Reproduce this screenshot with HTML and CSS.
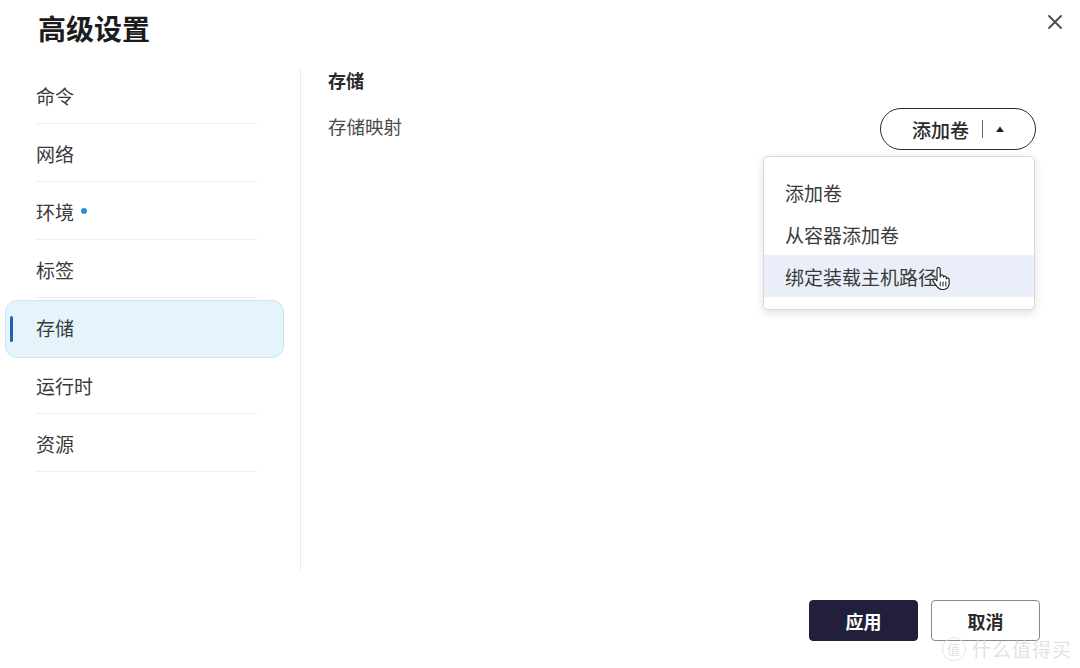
FILE: index.html
```html
<!DOCTYPE html>
<html lang="zh-CN">
<head>
<meta charset="utf-8">
<title>高级设置</title>
<link rel="stylesheet" href="styles.css">
</head>
<body>
<div class="dialog">
  <header class="header">
    <h1 class="title">高级设置</h1>
    <button class="close" aria-label="关闭">
      <svg width="16" height="16" viewBox="0 0 16 16"><path d="M2 2L14 14M14 2L2 14" stroke="#4a4a4a" stroke-width="1.8" stroke-linecap="round"/></svg>
    </button>
  </header>
  <div class="main">
    <nav class="sidebar">
      <ul class="nav">
        <li class="nav-item"><div class="nav-inner">命令</div></li>
        <li class="nav-item"><div class="nav-inner">网络</div></li>
        <li class="nav-item"><div class="nav-inner">环境<span class="dot"></span></div></li>
        <li class="nav-item"><div class="nav-inner">标签</div></li>
        <li class="nav-item active"><div class="nav-inner">存储</div></li>
        <li class="nav-item"><div class="nav-inner">运行时</div></li>
        <li class="nav-item"><div class="nav-inner">资源</div></li>
      </ul>
    </nav>
    <section class="content">
      <h2 class="section-title">存储</h2>
      <div class="row">
        <span class="row-label">存储映射</span>
        <div class="split-wrap">
          <button class="split-btn">
            <span class="split-text">添加卷</span>
            <span class="split-sep"></span>
            <svg class="caret" width="10" height="8" viewBox="0 0 10 8"><path d="M1 7L5 1.5L9 7Z" fill="#222"/></svg>
          </button>
          <ul class="menu">
            <li class="menu-item">添加卷</li>
            <li class="menu-item">从容器添加卷</li>
            <li class="menu-item hover">绑定装载主机路径
              <svg class="cursor" width="22" height="24" viewBox="0 0 22 24">
                <path d="M6 2.2c0-1 .7-1.7 1.6-1.7s1.6.7 1.6 1.7V10l.3-1.2c.3-.8 1.1-1.2 1.9-.9.6.2 1 .8 1 1.4v.8c.3-.7 1-1.1 1.8-.9.7.2 1.1.8 1.1 1.5v.9c.4-.6 1.1-.8 1.8-.6.7.3 1 .9 1 1.6v4.3c0 3.1-2.5 5.6-5.6 5.6H11c-1.8 0-3.4-.9-4.500-2.3L2.3 14.6c-.6-.8-.5-1.8.3-2.4.7-.5 1.7-.4 2.3.3L6 13.9V2.2z" fill="#fff" stroke="#1a1a1a" stroke-width="1.1" stroke-linejoin="round"/>
                <path d="M9.2 15v4M12 15v4M14.8 15v4" stroke="#1a1a1a" stroke-width="1" stroke-linecap="round"/>
              </svg>
            </li>
          </ul>
        </div>
      </div>
    </section>
  </div>
  <footer class="footer">
    <button class="btn btn-primary">应用</button>
    <button class="btn btn-secondary">取消</button>
  </footer>
  <div class="watermark"><span class="wm-logo">值</span>什么值得买</div>
</div>
</body>
</html>
```

FILE: styles.css
```css
* { box-sizing: border-box; }
html, body { margin: 0; padding: 0; }
body {
  width: 1080px;
  height: 668px;
  overflow: hidden;
  background: #ffffff;
  font-family: "Noto Sans CJK SC", "Noto Sans", sans-serif;
  color: #333;
}
.dialog {
  position: relative;
  width: 1080px;
  height: 668px;
}
.header {
  height: 68px;
  display: flex;
  align-items: flex-start;
  justify-content: space-between;
  padding: 9px 16px 0 38px;
}
.title {
  margin: 0;
  font-size: 28px;
  line-height: 38px;
  font-weight: 700;
  color: #1c1c1c;
}
.close {
  border: 0;
  background: none;
  padding: 0;
  margin-top: 4px;
  width: 18px;
  height: 18px;
  display: flex;
  align-items: center;
  justify-content: center;
}
.main {
  display: flex;
  height: 502px;
}
.sidebar {
  width: 301px;
  border-right: 1px solid #ebebeb;
  padding-left: 5px;
}
.nav {
  list-style: none;
  margin: 0;
  padding: 0;
  width: 279px;
}
.nav-item {
  position: relative;
  height: 58px;
  padding: 0 26px 0 30px;
  border: 1px solid transparent;
  border-radius: 12px;
}
.nav-inner {
  height: 57px;
  display: flex;
  align-items: center;
  font-size: 19px;
  color: #3a3a3a;
  border-bottom: 1px solid #eeeeee;
  margin-top: -2px;
}
.nav-item.active {
  background: #e5f4fb;
  border-color: #c9e4f2;
}
.nav-item.active .nav-inner { border-bottom-color: transparent; }
.nav-item.active::before {
  content: "";
  position: absolute;
  left: 4px;
  top: 15px;
  width: 3px;
  height: 26px;
  border-radius: 2px;
  background: #1b64b4;
}
.dot {
  width: 6px;
  height: 6px;
  border-radius: 50%;
  background: #2e8fd3;
  margin-left: 7px;
}
.content {
  flex: 1;
  padding: 0 44px 0 27px;
}
.section-title {
  margin: 0;
  font-size: 18px;
  line-height: 24px;
  font-weight: 700;
  color: #2a2a2a;
}
.row {
  margin-top: 16px;
  display: flex;
  justify-content: space-between;
  align-items: flex-start;
}
.row-label {
  font-size: 18.5px;
  line-height: 24px;
  margin-top: 6px;
  color: #4a4a4a;
}
.split-wrap { position: relative; }
.split-btn {
  width: 156px;
  height: 42px;
  border: 1.5px solid #2a2a2a;
  border-radius: 21px;
  background: #fff;
  display: flex;
  align-items: center;
  justify-content: flex-end;
  padding: 0 30px 0 0;
  font-family: inherit;
  cursor: pointer;
}
.split-text {
  font-size: 19px;
  font-weight: 500;
  color: #2a2a2a;
}
.split-sep {
  width: 1px;
  height: 18px;
  background: #6a6a6a;
  margin: 0 12px 0 13px;
}
.caret { margin-top: -1px; }
.menu {
  position: absolute;
  top: 48px;
  right: 1px;
  width: 272px;
  list-style: none;
  margin: 0;
  padding: 14px 0 12px;
  background: #fff;
  border: 1px solid #d8d8d8;
  border-radius: 5px;
  box-shadow: 0 3px 10px rgba(0,0,0,0.12);
}
.menu-item {
  position: relative;
  height: 42px;
  display: flex;
  align-items: center;
  padding-left: 21px;
  font-size: 19px;
  color: #3a3a3a;
}
.menu-item.hover { background: #e9eef8; }
.cursor {
  position: absolute;
  left: 167px;
  top: 12px;
}
.footer {
  display: flex;
  justify-content: flex-end;
  gap: 13px;
  padding: 30px 40px 0 0;
}
.btn {
  width: 109px;
  height: 41px;
  border-radius: 4px;
  font-family: inherit;
  font-size: 18px;
  font-weight: 700;
  cursor: pointer;
}
.btn-primary {
  background: #211f3c;
  color: #fff;
  border: 1px solid #211f3c;
}
.btn-secondary {
  background: #fff;
  color: #2a2a2a;
  border: 1.5px solid #8a8a8a;
}
.watermark {
  position: absolute;
  right: 8px;
  bottom: 6px;
  display: flex;
  align-items: center;
  gap: 2px;
  font-size: 19px;
  color: #e2e2e2;
  letter-spacing: 1px;
}
.wm-logo {
  display: inline-flex;
  width: 24px;
  height: 24px;
  align-items: center;
  justify-content: center;
  border: 1.5px solid #e4e4e4;
  border-radius: 50%;
  font-size: 13px;
  margin-right: 4px;
}
```
